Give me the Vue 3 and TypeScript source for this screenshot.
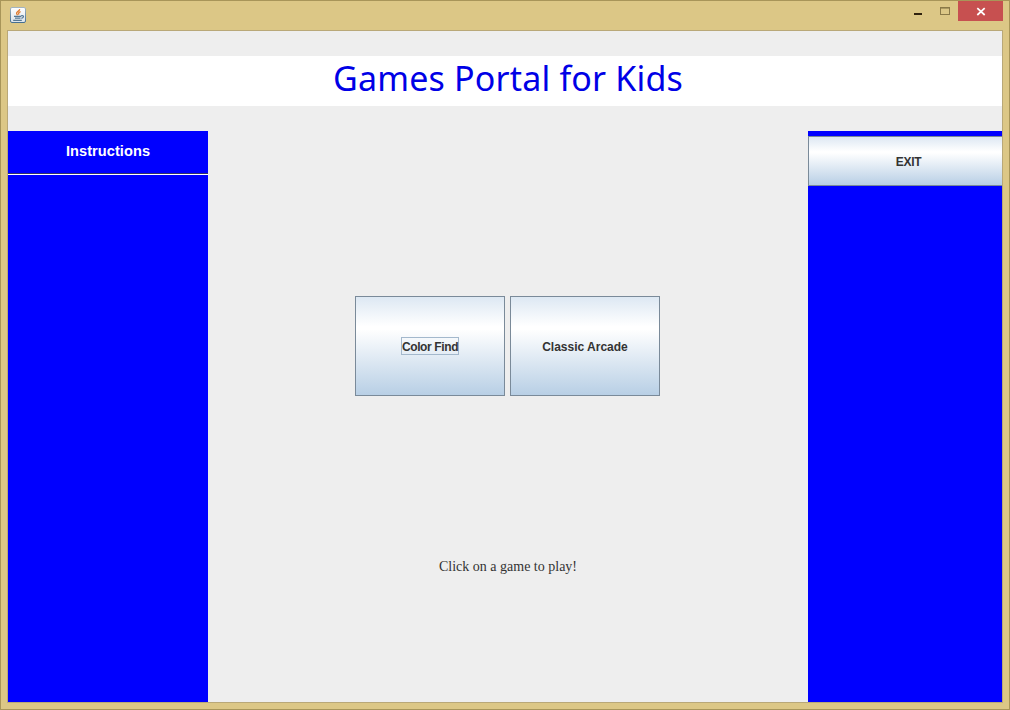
<script setup lang="ts">
import { ref } from 'vue'

const games = [
  { name: 'Color Find', tight: true },
  { name: 'Classic Arcade', tight: false },
]
const focused = ref('Color Find')
</script>

<template>
  <div class="window">
    <header class="titlebar">
      <svg class="java" width="16" height="16" viewBox="0 0 16 16">
        <defs>
          <linearGradient id="tile" x1="0" y1="0" x2="0" y2="1">
            <stop offset="0" stop-color="#ffffff" />
            <stop offset="1" stop-color="#dbe2e8" />
          </linearGradient>
          <linearGradient id="edge" x1="0" y1="0" x2="0" y2="1">
            <stop offset="0" stop-color="#a3b4c0" />
            <stop offset="1" stop-color="#456f91" />
          </linearGradient>
        </defs>
        <rect x=".5" y=".5" width="15" height="15" rx="1.5" fill="url(#tile)" stroke="url(#edge)" />
        <path d="M9.6 2.2C10 4.2 6 4.6 6.6 6.4L7.5 8.2M10.6 4.6C8.6 5.2 8.2 6 9 7.6" fill="none" stroke="#e07a2c" stroke-width="1.3" />
        <path d="M4 9.3H11M5 11.2H10.5M3.2 13.3H11.8M11 8.9C14.6 8 14 10.6 11.4 11.3" fill="none" stroke="#557894" stroke-width="1.2" />
      </svg>
      <svg class="controls" width="89" height="20" viewBox="0 0 89 20" shape-rendering="crispEdges">
        <rect x="0" y="12" width="8" height="2" fill="#30220e" />
        <rect x="26.5" y="6.5" width="9" height="7" fill="none" stroke="#8a7948" />
        <path d="M26 7.5H36" stroke="#8a7948" stroke-opacity=".6" />
        <rect x="44" y="0" width="45" height="20" fill="#c75050" />
        <path d="M63.3 7.2L70.7 14M70.7 7.2L63.3 14" shape-rendering="auto" stroke="#fff" stroke-width="1.7" />
      </svg>
    </header>
    <main class="client">
      <h1>Games Portal for Kids</h1>
      <div class="body">
        <aside class="left">
          <div class="menu">Instructions</div>
        </aside>
        <section class="center">
          <div class="games">
            <button v-for="game in games" :key="game.name" @click="focused = game.name">
              <span :class="{ focus: focused === game.name, tight: game.tight }">{{ game.name }}</span>
            </button>
          </div>
          <p>Click on a game to play!</p>
        </section>
        <aside class="right">
          <button class="exit"><span>EXIT</span></button>
        </aside>
      </div>
    </main>
  </div>
</template>

<style>
body { margin: 0; overflow: hidden; }
</style>

<style scoped>
.window {
  box-sizing: border-box;
  width: 1010px;
  height: 710px;
  border: 1px solid #a89559;
  padding: 0 6px 6px;
  background: #dcc786;
}
.titlebar {
  height: 29px;
  display: flex;
  justify-content: space-between;
}
.java { margin: 6px 0 0 3px; display: block; }
.controls { display: block; }
.client {
  box-sizing: border-box;
  height: 673px;
  border: 1px solid #b9a878;
  background: #eee;
  padding-top: 25px;
  overflow: hidden;
}
h1 {
  margin: 0;
  height: 50px;
  background: #fff;
  color: #0000e6;
  font: 400 34px/44px "Noto Sans", sans-serif;
  letter-spacing: .18px;
  text-align: center;
  white-space: nowrap;
  padding-left: 6px;
}
.body { margin-top: 25px; height: 571px; display: flex; }
.left, .right { background: #00f; flex: none; }
.left { width: 200px; }
.right { width: 194px; padding-top: 5px; box-sizing: border-box; overflow: hidden; }
.menu {
  height: 42px;
  border-bottom: 1px solid #333366;
  box-shadow: 0 1px #fff;
  color: #fff;
  text-align: center;
  font: bold 14.6px/40px "Liberation Sans", Arial, sans-serif;
  letter-spacing: .05px;
}
.center { flex: 1; padding-top: 165px; box-sizing: border-box; }
.games { display: flex; gap: 5px; margin-left: 147px; }
button {
  box-sizing: border-box;
  width: 150px;
  height: 100px;
  padding: 0;
  border: 1px solid #7a8a99;
  border-radius: 0;
  color: #333;
  background: linear-gradient(#dde8f3 0%, #fff 30%, #fff 33%, #b8cfe5 100%);
  font: bold 12px/14px "Liberation Sans", Arial, sans-serif;
}
button span { display: inline-block; vertical-align: top; border: 1px solid transparent; padding-top: 2px; }
button span.tight { letter-spacing: -.38px; }
button span.focus { border-color: #a3b8cc; }
.exit { display: block; width: 200px; height: 50px; letter-spacing: -.3px; }
.exit span { margin-left: 1px; }
p {
  margin: 161px 0 0;
  text-align: center;
  color: #333;
  font: 14px/20px "Liberation Serif", "Times New Roman", serif;
}
</style>
